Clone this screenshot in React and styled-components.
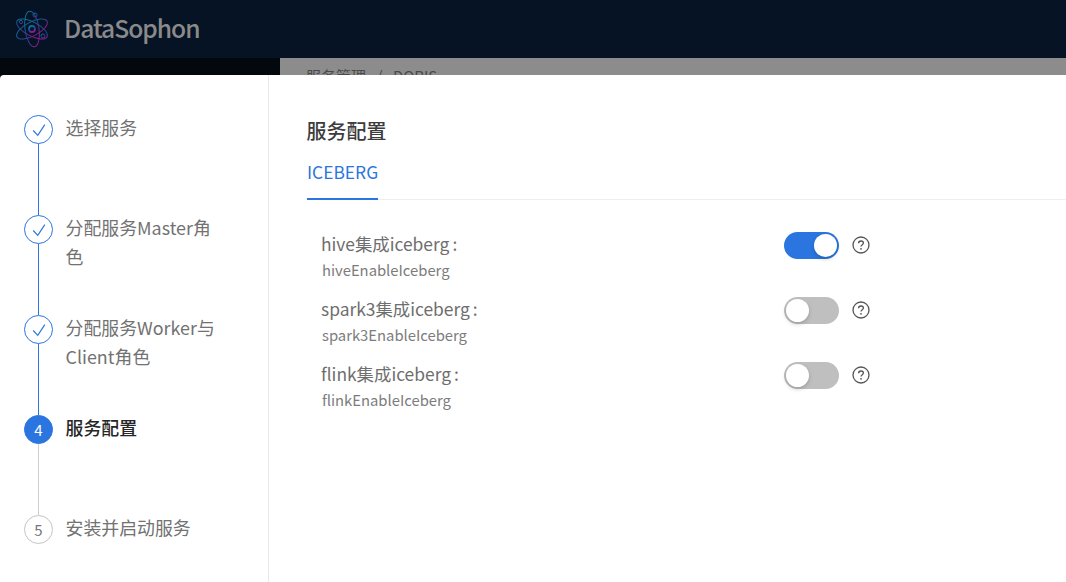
import styled, { createGlobalStyle } from "styled-components"

const Global = createGlobalStyle`
html, body { margin:0; padding:0; width:100%; height:100%; overflow:hidden; background:#8c8c8c; }
body { font-family:"Noto Sans CJK SC","Noto Sans",sans-serif; }
`
const Page = styled.div`
width:1066px;
height:582px;
position:relative;
overflow:hidden;
display:flex;
flex-direction:column;
`
const Header = styled.header`
height:58px;
flex:none;
background:#061324;
display:flex;
align-items:center;
padding-left:15px;
gap:15px;
box-sizing:border-box;
`
const Brand = styled.div`
font-size:24.6px;
font-weight:500;
color:#8a8a8a;
letter-spacing:-1px;
line-height:54px;
height:58px;
`
const Under = styled.div`
flex:1;
display:flex;
`
const Sider = styled.div`
width:280px;
background:#03080f;
`
const Content = styled.div`
flex:1;
background:#8c8c8c;
padding:8px 0 0 26px;
font-size:15px;
line-height:20px;
color:#4a4a4a;
`
const Sep = styled.span`
margin:0 10.5px;
`
const Drawer = styled.div`
position:absolute;
left:0;
top:75px;
width:1066px;
height:507px;
background:#fff;
border-radius:4px 0 0 0;
display:flex;
`
const Steps = styled.div`
width:244px;
flex:none;
border-right:1px solid #e8e8e8;
padding:40px 0 0 24px;
display:flex;
flex-direction:column;
`
const Step = styled.div`
height:100px;
flex:none;
display:flex;
gap:12.5px;
`
const Rail = styled.div`
width:29px;
flex:none;
display:flex;
flex-direction:column;
align-items:center;
`
const Dot = styled.div`
width:29px;
height:29px;
flex:none;
box-sizing:border-box;
border-radius:50%;
display:flex;
align-items:center;
justify-content:center;
font-size:15px;
line-height:25px;
border:1px solid ${p => p.$state === 'todo' ? '#c4c4c4' : '#2a75e0'};
background:${p => p.$state === 'active' ? '#2a75e0' : '#fff'};
color:${p => p.$state === 'active' ? '#fff' : p.$state === 'todo' ? '#777' : '#2a75e0'};
`
const Line = styled.div`
width:1px;
flex:1;
background:${p => p.$done ? '#2a75e0' : '#cfcfcf'};
`
const StepLabel = styled.div`
width:155px;
font-size:17.9px;
line-height:29px;
margin-top:-2px;
font-weight:${p => p.$active ? 500 : 400};
color:${p => p.$active ? '#262626' : '#727272'};
`
const Main = styled.div`
flex:1;
padding:40px 0 0 38px;
`
const Title = styled.div`
font-size:20px;
font-weight:500;
line-height:32px;
color:#3c3c3c;
margin-left:-0.5px;
`
const Tabs = styled.div`
margin-top:10px;
height:43px;
box-sizing:border-box;
border-bottom:1px solid #eeeeee;
display:flex;
`
const Tab = styled.div`
height:43px;
box-sizing:border-box;
border-bottom:2px solid #2a75e0;
font-size:17.4px;
line-height:26px;
color:#2a75e0;
padding-top:2px;
`
const Form = styled.div`
padding:29px 0 0 14px;
display:flex;
flex-direction:column;
`
const Row = styled.div`
height:65px;
flex:none;
display:flex;
`
const Labels = styled.div`
width:463px;
flex:none;
`
const Label = styled.div`
font-size:17.4px;
line-height:30px;
color:#6e6e6e;
`
const Colon = styled.span`
margin-left:3px;
`
const Sub = styled.div`
font-size:14.8px;
line-height:22px;
color:#7c7c7c;
padding-left:1px;
`
const Switch = styled.div`
width:55px;
height:27px;
margin-top:3px;
flex:none;
box-sizing:border-box;
padding:2px;
border-radius:14px;
display:flex;
justify-content:${p => p.$on ? 'flex-end' : 'flex-start'};
background:${p => p.$on ? '#2a75e0' : '#bfbfbf'};
`
const Knob = styled.div`
width:23px;
height:23px;
border-radius:50%;
background:#fff;
box-shadow:0 2px 4px rgba(0,35,11,.2);
`
const Help = styled.svg`
width:18px;
height:18px;
margin:7px 0 0 13px;
flex:none;
`

const Logo = () => (
    <svg width="34" height="40" viewBox="0 0 34 40" fill="none">
        <defs>
            <linearGradient id="atom" x1="0" y1="0" x2="0.6" y2="1">
                <stop offset="0" stopColor="#0b7f98" />
                <stop offset="0.55" stopColor="#134c98" />
                <stop offset="1" stopColor="#8a1c8c" />
            </linearGradient>
        </defs>
        <g stroke="url(#atom)" strokeWidth="1">
            <ellipse cx="17" cy="20" rx="17" ry="7" transform="rotate(28 17 20)" />
            <ellipse cx="17" cy="20" rx="17" ry="7" transform="rotate(-28 17 20)" />
            <ellipse cx="17" cy="20" rx="7" ry="18" transform="rotate(-8 17 20)" />
            <circle cx="17" cy="20" r="3" strokeWidth="1.8" />
            <circle cx="20" cy="6" r="2" />
            <circle cx="28" cy="27" r="2" />
            <circle cx="6" cy="13" r="1.6" />
        </g>
    </svg>
)

const Check = () => (
    <svg width="14" height="14" viewBox="0 0 14 14" fill="none">
        <path d="M1.2 7.5 L5.8 12.3 L12.8 1.7" stroke="#2a75e0" strokeWidth="1.2" />
    </svg>
)

const HelpIcon = () => (
    <Help viewBox="0 0 18 18" fill="none">
        <circle cx="9" cy="9" r="8" stroke="#555" strokeWidth="1.3" />
        <path d="M6.6 7.2 C6.6 5.8 7.7 5 9 5 C10.4 5 11.4 5.9 11.4 7.1 C11.4 8.6 9 8.8 9 10.6" stroke="#555" strokeWidth="1.3" />
        <circle cx="9" cy="12.8" r="0.9" fill="#555" />
    </Help>
)

const steps = [
    { label: '选择服务', state: 'done' },
    { label: '分配服务Master角色', state: 'done' },
    { label: '分配服务Worker与Client角色', state: 'done' },
    { label: '服务配置', state: 'active', num: 4 },
    { label: '安装并启动服务', state: 'todo', num: 5 },
]

const fields = [
    { label: 'hive集成iceberg', name: 'hiveEnableIceberg', on: true },
    { label: 'spark3集成iceberg', name: 'spark3EnableIceberg', on: false },
    { label: 'flink集成iceberg', name: 'flinkEnableIceberg', on: false },
]

export default function App() {
    return <Page>
        <Global />
        <Header>
            <Logo />
            <Brand>DataSophon</Brand>
        </Header>
        <Under>
            <Sider />
            <Content>服务管理<Sep>/</Sep>DORIS</Content>
        </Under>
        <Drawer>
            <Steps>
                {steps.map((item, i) => <Step key={item.label}>
                    <Rail>
                        <Dot $state={item.state}>{item.state === 'done' ? <Check /> : item.num}</Dot>
                        {i < steps.length - 1 && <Line $done={item.state === 'done'} />}
                    </Rail>
                    <StepLabel $active={item.state === 'active'}>{item.label}</StepLabel>
                </Step>)}
            </Steps>
            <Main>
                <Title>服务配置</Title>
                <Tabs><Tab>ICEBERG</Tab></Tabs>
                <Form>
                    {fields.map(item => <Row key={item.name}>
                        <Labels>
                            <Label>{item.label}<Colon>:</Colon></Label>
                            <Sub>{item.name}</Sub>
                        </Labels>
                        <Switch $on={item.on}><Knob /></Switch>
                        <HelpIcon />
                    </Row>)}
                </Form>
            </Main>
        </Drawer>
    </Page>
}
